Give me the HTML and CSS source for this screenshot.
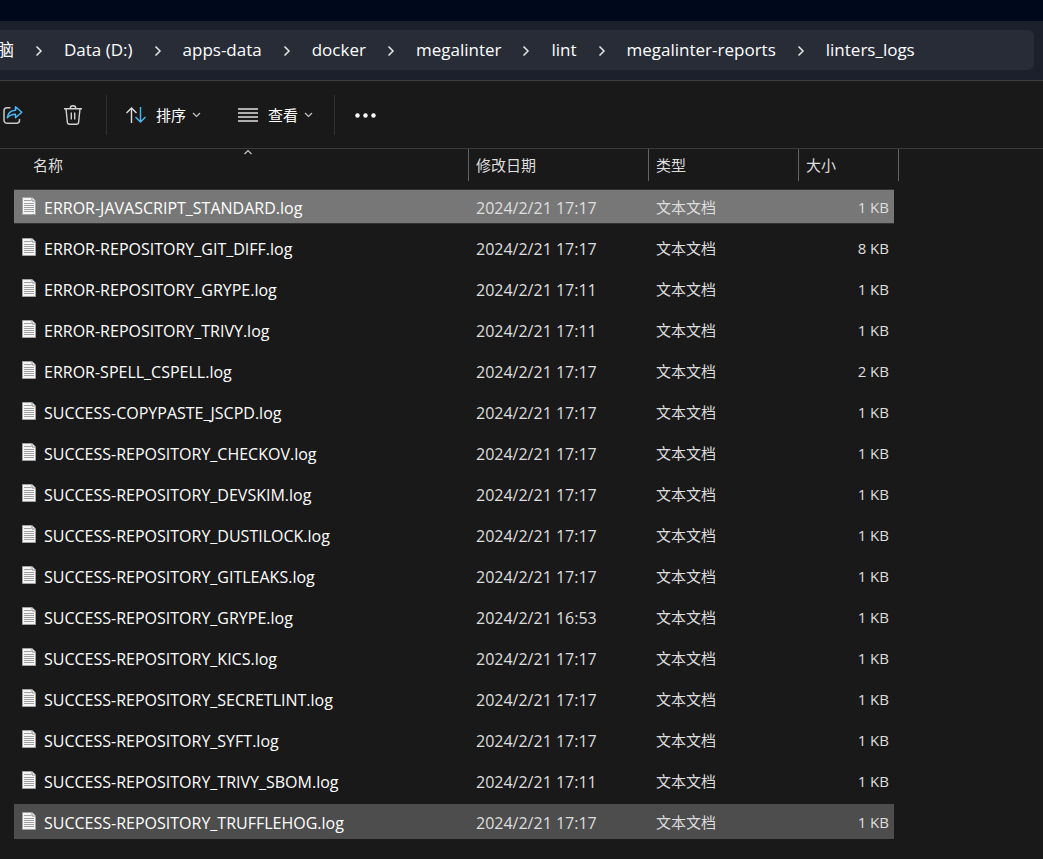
FILE: index.html
```html
<!DOCTYPE html>
<html lang="zh-CN">
<head>
<meta charset="utf-8">
<title>linters_logs</title>
<link rel="stylesheet" href="styles.css">
</head>
<body>
<svg class="sprite" aria-hidden="true">
  <symbol id="chevron" viewBox="0 0 8 12"><path d="M1.500 1.500 6 6l-4.500 4.500" fill="none" stroke="currentColor" stroke-width="1.500"/></symbol>
  <symbol id="caret" viewBox="0 0 9 6"><path d="M1 1l3.500 3.500L8 1" fill="none" stroke="currentColor" stroke-width="1.200"/></symbol>
  <symbol id="doc" viewBox="0 0 14 18">
    <path d="M.5.5h9.500l3.500 3.500v13.500H.5z" fill="#f6f6f6" stroke="#a2a2a2"/>
    <path d="M10 .5V4h3.500" fill="#fff" stroke="#8c8c8c"/>
    <path d="M2 3.500h7M2 6.500h10M2 8.500h10M2 10.500h10M2 12.500h10M2 14.500h10" stroke="#a0a0a0"/>
  </symbol>
</svg>
<header class="topbar">
  <nav class="address" aria-label="路径">
    <a class="crumb first" href="#">脑</a>
    <svg class="chevron"><use href="#chevron"/></svg>
    <a class="crumb" href="#">Data (D:)</a>
    <svg class="chevron"><use href="#chevron"/></svg>
    <a class="crumb" href="#">apps-data</a>
    <svg class="chevron"><use href="#chevron"/></svg>
    <a class="crumb" href="#">docker</a>
    <svg class="chevron"><use href="#chevron"/></svg>
    <a class="crumb" href="#">megalinter</a>
    <svg class="chevron"><use href="#chevron"/></svg>
    <a class="crumb" href="#">lint</a>
    <svg class="chevron"><use href="#chevron"/></svg>
    <a class="crumb" href="#">megalinter-reports</a>
    <svg class="chevron"><use href="#chevron"/></svg>
    <a class="crumb" href="#">linters_logs</a>
  </nav>
</header>
<div class="toolbar" role="toolbar">
  <div class="group icons">
    <button class="tool" aria-label="共享">
      <svg width="20" height="20" viewBox="0 0 20 20" fill="none" stroke-width="1.500">
        <path d="M7.500 2.700H4A3 3 0 0 0 1 5.700v9.600a3 3 0 0 0 3 3h9.500a3 3 0 0 0 3-3v-1.300" stroke="#c8c8c8"/>
        <path d="M12.500 1.800v3.400C7.800 5.400 4.800 8.300 4.300 12.800c2-2.400 4.600-3.600 8.200-3.600v3.600L18.800 7.200z" stroke="#4cb8f0" stroke-linejoin="round"/>
      </svg>
    </button>
    <button class="tool" aria-label="删除">
      <svg width="18" height="20" viewBox="0 0 18 20" fill="none" stroke="#d2d2d2" stroke-width="1.400">
        <path d="M0 3.700h18M6.200 3.500a2.800 2.800 0 0 1 5.600 0M2 3.700l1.400 13.500a2.200 2.200 0 0 0 2.200 2h6.800a2.200 2.200 0 0 0 2.200-2L16 3.700M7.300 7.500v7M10.700 7.500v7"/>
      </svg>
    </button>
  </div>
  <div class="group menus">
    <button class="tool menu">
      <svg width="20" height="16" viewBox="0 0 20 16" fill="none" stroke-width="1.400">
        <path d="M5.500 16V1M.5 6l5-5 5 5" stroke="#dcdcdc"/><path d="M14.500 0v15M9.500 10l5 5 5-5" stroke="#4cb8f0"/>
      </svg>
      <span>排序</span>
      <svg class="caret"><use href="#caret"/></svg>
    </button>
    <button class="tool menu">
      <svg width="20" height="14" viewBox="0 0 20 14"><path d="M0 1h20M0 5h20M0 9h20M0 13h20" stroke="#e0e0e0" stroke-width="1.400"/></svg>
      <span>查看</span>
      <svg class="caret"><use href="#caret"/></svg>
    </button>
  </div>
  <button class="tool more" aria-label="更多">
    <svg width="21" height="5" viewBox="0 0 21 5" fill="#fff"><circle cx="2.500" cy="2.500" r="2.200"/><circle cx="10.500" cy="2.500" r="2.200"/><circle cx="18.500" cy="2.500" r="2.200"/></svg>
  </button>
</div>
<main class="content">
<table class="files">
  <colgroup><col class="c-name"><col class="c-date"><col class="c-type"><col class="c-size"></colgroup>
  <thead><tr>
    <th class="sorted"><span class="head">名称</span><svg class="caret up"><use href="#caret"/></svg></th>
    <th><span class="head">修改日期</span></th><th><span class="head">类型</span></th><th><span class="head">大小</span></th>
  </tr></thead>
  <tbody>
    <tr class="selected"><td><span class="file"><svg class="doc"><use href="#doc"/></svg>ERROR-JAVASCRIPT_STANDARD.log</span></td><td>2024/2/21 17:17</td><td>文本文档</td><td>1 KB</td></tr>
    <tr><td><span class="file"><svg class="doc"><use href="#doc"/></svg>ERROR-REPOSITORY_GIT_DIFF.log</span></td><td>2024/2/21 17:17</td><td>文本文档</td><td>8 KB</td></tr>
    <tr><td><span class="file"><svg class="doc"><use href="#doc"/></svg>ERROR-REPOSITORY_GRYPE.log</span></td><td>2024/2/21 17:11</td><td>文本文档</td><td>1 KB</td></tr>
    <tr><td><span class="file"><svg class="doc"><use href="#doc"/></svg>ERROR-REPOSITORY_TRIVY.log</span></td><td>2024/2/21 17:11</td><td>文本文档</td><td>1 KB</td></tr>
    <tr><td><span class="file"><svg class="doc"><use href="#doc"/></svg>ERROR-SPELL_CSPELL.log</span></td><td>2024/2/21 17:17</td><td>文本文档</td><td>2 KB</td></tr>
    <tr><td><span class="file"><svg class="doc"><use href="#doc"/></svg>SUCCESS-COPYPASTE_JSCPD.log</span></td><td>2024/2/21 17:17</td><td>文本文档</td><td>1 KB</td></tr>
    <tr><td><span class="file"><svg class="doc"><use href="#doc"/></svg>SUCCESS-REPOSITORY_CHECKOV.log</span></td><td>2024/2/21 17:17</td><td>文本文档</td><td>1 KB</td></tr>
    <tr><td><span class="file"><svg class="doc"><use href="#doc"/></svg>SUCCESS-REPOSITORY_DEVSKIM.log</span></td><td>2024/2/21 17:17</td><td>文本文档</td><td>1 KB</td></tr>
    <tr><td><span class="file"><svg class="doc"><use href="#doc"/></svg>SUCCESS-REPOSITORY_DUSTILOCK.log</span></td><td>2024/2/21 17:17</td><td>文本文档</td><td>1 KB</td></tr>
    <tr><td><span class="file"><svg class="doc"><use href="#doc"/></svg>SUCCESS-REPOSITORY_GITLEAKS.log</span></td><td>2024/2/21 17:17</td><td>文本文档</td><td>1 KB</td></tr>
    <tr><td><span class="file"><svg class="doc"><use href="#doc"/></svg>SUCCESS-REPOSITORY_GRYPE.log</span></td><td>2024/2/21 16:53</td><td>文本文档</td><td>1 KB</td></tr>
    <tr><td><span class="file"><svg class="doc"><use href="#doc"/></svg>SUCCESS-REPOSITORY_KICS.log</span></td><td>2024/2/21 17:17</td><td>文本文档</td><td>1 KB</td></tr>
    <tr><td><span class="file"><svg class="doc"><use href="#doc"/></svg>SUCCESS-REPOSITORY_SECRETLINT.log</span></td><td>2024/2/21 17:17</td><td>文本文档</td><td>1 KB</td></tr>
    <tr><td><span class="file"><svg class="doc"><use href="#doc"/></svg>SUCCESS-REPOSITORY_SYFT.log</span></td><td>2024/2/21 17:17</td><td>文本文档</td><td>1 KB</td></tr>
    <tr><td><span class="file"><svg class="doc"><use href="#doc"/></svg>SUCCESS-REPOSITORY_TRIVY_SBOM.log</span></td><td>2024/2/21 17:11</td><td>文本文档</td><td>1 KB</td></tr>
    <tr class="hovered"><td><span class="file"><svg class="doc"><use href="#doc"/></svg>SUCCESS-REPOSITORY_TRUFFLEHOG.log</span></td><td>2024/2/21 17:17</td><td>文本文档</td><td>1 KB</td></tr>
  </tbody>
</table>
</main>
</body>
</html>
```
FILE: styles.css
```css
* { box-sizing: border-box; }
body {
  margin: 0;
  min-height: 100vh;
  background: #191919;
  color: #fff;
  font: 15px/20px "Open Sans", "Noto Sans CJK SC", sans-serif;
  font-kerning: none;
}
svg { display: block; flex: none; }
.sprite { display: none; }

.topbar {
  padding: 9px 9px 10px 0;
  border-top: 21px solid #00081c;
  border-bottom: 1px solid #3f3f3f;
  background: #1b202c;
}
.address {
  display: flex;
  align-items: center;
  height: 40px;
  border-radius: 0 6px 6px 0;
  background: #272c37;
  overflow: hidden;
}
.crumb {
  color: #fff;
  font-size: 17px;
  text-decoration: none;
  white-space: nowrap;
}
.first { margin-left: -3px; }
.chevron { width: 8px; height: 12px; margin: 2px 21px 0; color: #e6e6e6; }

.toolbar {
  display: flex;
  align-items: center;
  height: 68px;
  border-bottom: 1px solid #3a3a3a;
}
.group {
  display: flex;
  align-items: center;
  height: 40px;
  border-right: 1px solid #303030;
}
.tool {
  display: flex;
  align-items: center;
  height: 32px;
  padding: 0;
  border: 0;
  background: none;
  color: #fff;
  font: inherit;
}
.icons { gap: 41px; padding: 0 24px 0 3px; }
.menus { padding-right: 3px; }
.menu { gap: 10px; padding: 0 18px 0 19px; }
.menu .caret { margin-left: -4px; }
.caret { width: 9px; height: 6px; color: #c4c4c4; }
.more { padding: 2px 0 0 20px; }

.content { padding-left: 14px; }
.files {
  width: 885px;
  table-layout: fixed;
  border-collapse: separate;
  border-spacing: 0;
}
.c-name { width: 455px; }
.c-date { width: 180px; }
.c-type { width: 150px; }
.c-size { width: 100px; }
.files th {
  position: relative;
  height: 37px;
  padding: 0;
  color: #dedede;
  font-weight: 400;
  text-align: left;
  vertical-align: top;
}
.head {
  display: block;
  height: 32px;
  padding: 6px 7px;
  border-right: 1px solid #636363;
}
.sorted .head { padding-left: 19px; }
.up {
  position: absolute;
  top: 0;
  left: 50%;
  width: 12px;
  transform: rotate(180deg);
}
.files td {
  height: 41px;
  padding: 0 7px;
  border: 3px solid transparent;
  border-width: 3px 0;
  background-clip: padding-box;
  color: #dedede;
}
.files td:first-child { padding: 2px 7px 0 8px; font-size: 16px; }
.files td:nth-child(2) { padding-top: 2px; font-size: 16px; }
.files td:last-child {
  padding-right: 5px;
  border-right-width: 5px;
  text-align: right;
}
.file { display: flex; align-items: center; gap: 8px; color: #fff; white-space: nowrap; }
.doc { width: 14px; height: 18px; margin-bottom: 4px; }
.selected td { background-color: #777; box-shadow: inset 0 1px #333, inset 0 -1px #333; }
.hovered td { background-color: #4d4d4d; }
.hovered td:first-child { border-radius: 2px 0 0 2px; }
```
